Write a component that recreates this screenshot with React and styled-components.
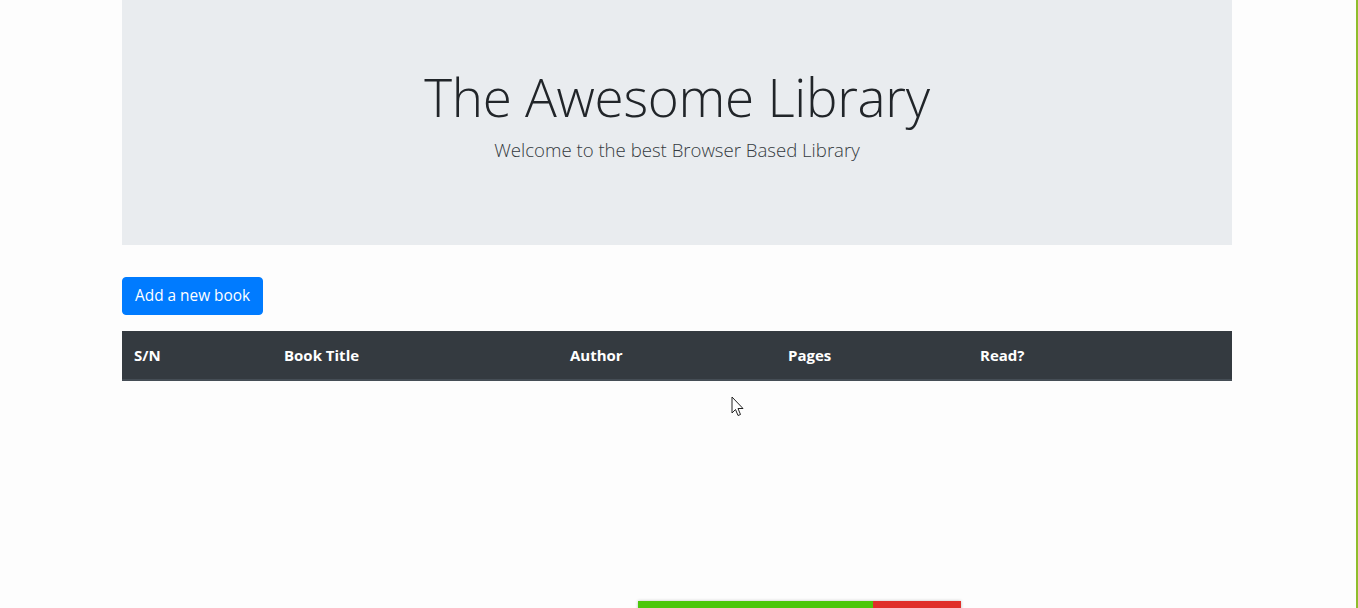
import React from "react";
import styled, { createGlobalStyle } from "styled-components";

const Global = createGlobalStyle`
  html, body { margin: 0; padding: 0; background: #fdfdfd; overflow: hidden; }
  body { font-family: "Open Sans", "Noto Sans", "Liberation Sans", sans-serif; color: #212529; }
  * { box-sizing: border-box; }
`;

const Page = styled.div`
  min-height: 608px;
  padding-right: 2px;
  border-right: 2px solid #8fbd2c;
  position: relative;
`;

const Container = styled.div`
  width: 1110px;
  margin: 0 auto;
`;

const Jumbotron = styled.header`
  background: #e9ecef;
  height: 245px;
  padding-top: 63px;
  text-align: center;
  margin-bottom: 32px;
`;

const Title = styled.h1`
  margin: 0 0 5px;
  font-size: 53px;
  font-weight: 300;
  line-height: 67px;
  color: #212529;
  letter-spacing: -0.3px;
`;

const Lead = styled.p`
  margin: 0;
  font-size: 18.6px;
  font-weight: 300;
  line-height: 30px;
  color: #343a40;
`;

const PrimaryButton = styled.button`
  display: inline-block;
  height: 38px;
  padding: 0 12px;
  border: 1px solid #007bff;
  border-radius: 4px;
  background: #007bff;
  color: #fff;
  font-family: inherit;
  font-size: 15.4px;
  line-height: 36px;
  cursor: pointer;
`;

const Table = styled.table`
  width: 100%;
  margin-top: 16px;
  border-collapse: collapse;
`;

const Th = styled.th`
  background: #343a40;
  color: #fff;
  text-align: left;
  font-weight: 700;
  font-size: 15px;
  line-height: 24px;
  padding: 12px;
  border-bottom: 2px solid #454d55;
  width: ${(p) => p.$w}px;
`;

const Cursor = styled.svg`
  position: absolute;
  left: 731px;
  top: 396px;
`;

const Toast = styled.div`
  position: absolute;
  left: 638px;
  top: 601px;
  display: flex;
  height: 40px;
  box-shadow: 0 0 3px rgba(0, 0, 0, 0.25);
  color: #fff;
  font-size: 15px;
  font-weight: 700;
`;

const ToastPart = styled.div`
  width: ${(p) => p.$w}px;
  background: ${(p) => p.$bg};
  padding: 3px 8px;
  white-space: nowrap;
  overflow: hidden;
`;

const columns = [
  ["S/N", 150],
  ["Book Title", 286],
  ["Author", 218],
  ["Pages", 192],
  ["Read?", 264],
];

export default function App() {
  return (
    <Page>
      <Global />
      <Container>
        <Jumbotron>
          <Title>The Awesome Library</Title>
          <Lead>Welcome to the best Browser Based Library</Lead>
        </Jumbotron>
        <PrimaryButton>Add a new book</PrimaryButton>
        <Table>
          <thead>
            <tr>
              {columns.map(([label, w]) => (
                <Th key={label} $w={w}>
                  {label}
                </Th>
              ))}
            </tr>
          </thead>
          <tbody />
        </Table>
      </Container>
      <Cursor width="14" height="22" viewBox="0 0 14 22">
        <path
          d="M1 1 L1 17 L4.5 13.5 L7 19.5 L9.5 18.5 L7 12.5 L12 12.5 Z"
          fill="#fff"
          stroke="#222"
          strokeWidth="1"
          strokeLinejoin="round"
        />
      </Cursor>
      <Toast>
        <ToastPart $w={235} $bg="#4cc70b">Successfully loaded the library</ToastPart>
        <ToastPart $w={88} $bg="#e02f2a">Failed</ToastPart>
      </Toast>
    </Page>
  );
}
